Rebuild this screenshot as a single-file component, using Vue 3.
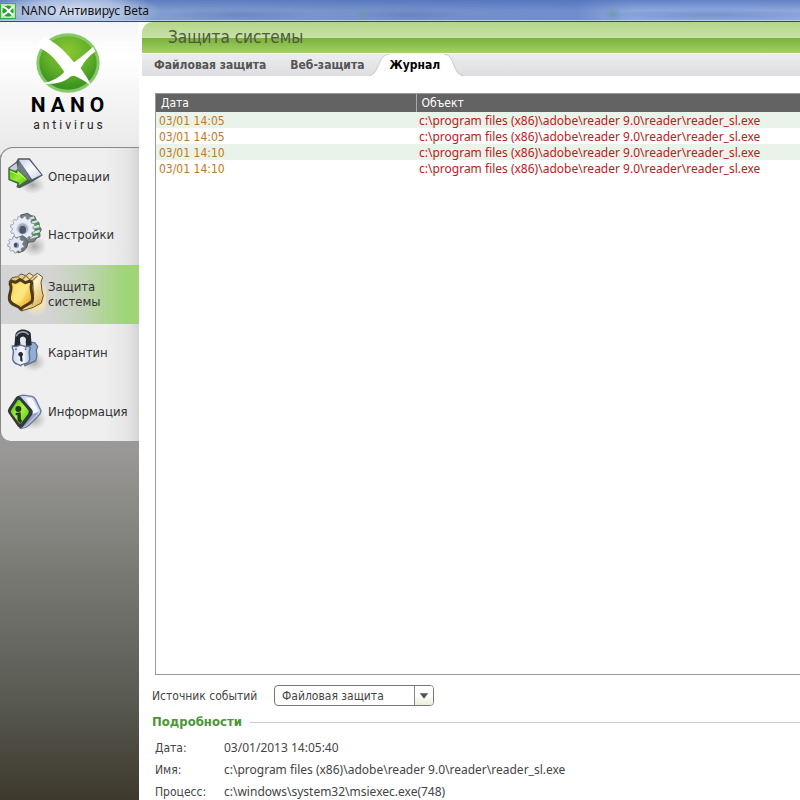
<script setup>
import { ref } from 'vue'

const tabs = ['Файловая защита', 'Веб-защита', 'Журнал']
const activeTab = ref('Журнал')

const menu = [
  { id: 'operations', label: 'Операции' },
  { id: 'settings', label: 'Настройки' },
  { id: 'protection', label: 'Защита системы' },
  { id: 'quarantine', label: 'Карантин' },
  { id: 'info', label: 'Информация' },
]
const activeItem = ref('protection')

const path = 'c:\\program files (x86)\\adobe\\reader 9.0\\reader\\reader_sl.exe'
const events = [
  { date: '03/01 14:05', object: path },
  { date: '03/01 14:05', object: path },
  { date: '03/01 14:10', object: path },
  { date: '03/01 14:10', object: path },
]
const source = ref('Файловая защита')
const details = [
  { name: 'Дата:', value: '03/01/2013 14:05:40' },
  { name: 'Имя:', value: path },
  { name: 'Процесс:', value: 'c:\\windows\\system32\\msiexec.exe(748)' },
]

// Gear outline: alternating tooth and root radii around a centre
function gear(cx, cy, outer, inner, teeth) {
  const points = []
  for (let i = 0; i < teeth; i++) {
    const a = (i / teeth) * Math.PI * 2
    const s = (Math.PI * 2) / teeth
    for (const [f, r] of [[0.05, inner], [0.2, outer], [0.55, outer], [0.7, inner]]) {
      points.push(`${(cx + r * Math.cos(a + s * f)).toFixed(1)},${(cy + r * Math.sin(a + s * f)).toFixed(1)}`)
    }
  }
  return points.join(' ')
}
</script>

<template>
  <div class="window">
    <header class="titlebar">
      <svg class="app-icon" viewBox="0 0 16 16" aria-hidden="true">
        <rect x="0.5" y="0.5" width="15" height="15" fill="#b4ecae" stroke="#3fae52" />
        <circle cx="8" cy="8" r="5.5" fill="#279b35" />
        <path d="M2 3.5 C5 4 8 7 9.5 9 L13 12 M13.5 3.5 C10 6 7 11 2.5 12" fill="none" stroke="#fff" stroke-width="2" />
      </svg>
      <span class="app-title">NANO Антивирус Beta</span>
    </header>

    <div class="body">
      <aside class="sidebar">
        <div class="brand">
          <svg class="logo" viewBox="105 39 198 180" aria-hidden="true">
            <defs>
              <radialGradient id="ball" cx="0.5" cy="0.3" r="0.65">
                <stop offset="0" stop-color="#8cc832" />
                <stop offset="0.6" stop-color="#62b028" />
                <stop offset="1" stop-color="#3c9420" />
              </radialGradient>
            </defs>
            <ellipse cx="204" cy="129" rx="95" ry="89" fill="#86c968" />
            <ellipse cx="204" cy="129" rx="86" ry="80" fill="url(#ball)" />
            <path d="M110 78 L134 92 C158 107 178 132 193 156 C172 177 150 188 112 191 L126 191 C156 194 187 192 213 169 L223 167 C239 174 257 184 274 198 C268 183 255 164 242 145 C252 125 267 109 286 94 L279 81 C259 98 240 115 222 127 C204 104 183 81 157 65 L134 48 Z" fill="#fff" />
          </svg>
          <strong class="brand-name">NANO</strong>
          <span class="brand-sub">antivirus</span>
        </div>

        <nav class="menu">
          <button
            v-for="item in menu"
            :key="item.id"
            type="button"
            class="menu-item"
            :class="{ active: item.id === activeItem }"
            @click="activeItem = item.id"
          >
            <svg v-if="item.id === 'operations'" class="menu-icon" viewBox="12 33 126 150" aria-hidden="true">
              <defs>
                <radialGradient id="shade"><stop offset="0" stop-color="#777" stop-opacity="0.6" /><stop offset="1" stop-color="#999" stop-opacity="0" /></radialGradient>
                <linearGradient id="panel" x1="0" y1="0" x2="1" y2="1"><stop offset="0" stop-color="#c6d0e6" /><stop offset="0.5" stop-color="#fbfcff" /><stop offset="1" stop-color="#c5cce8" /></linearGradient>
                <linearGradient id="arrow" x1="0" y1="0" x2="1" y2="1"><stop offset="0" stop-color="#4fbf0c" /><stop offset="0.5" stop-color="#98ee36" /><stop offset="1" stop-color="#42b808" /></linearGradient>
              </defs>
              <ellipse cx="98" cy="135" rx="38" ry="27" fill="url(#shade)" />
              <path d="M25 83 L48 66 L54 55 L89 55 L129 106 L96 126 L59 145 L49 142 L52 131 L25 120 Z" fill="#525a60" />
              <path d="M29 84 L50 69 L53 89 L45 92 L30 88 Z" fill="#c5cddb" />
              <path d="M57 62 L76 90 L94 123 L80 115 L53 87 Z" fill="#727d88" />
              <path d="M56 59 L87 59 L124 104 L96 118 Z" fill="url(#panel)" />
              <path d="M27 87 L50 98 L52 88 L84 119 L56 138 L56 128 L28 118 Z" fill="url(#arrow)" stroke="#286d0d" stroke-width="2" />
              <path d="M31 94 L55 104 L56 97 L76 117" fill="none" stroke="#caff7b" stroke-width="3" />
            </svg>
            <svg v-else-if="item.id === 'settings'" class="menu-icon" viewBox="12 211 126 150" aria-hidden="true">
              <ellipse cx="103" cy="320" rx="38" ry="32" fill="url(#shade)" />
              <path d="M62 226 L83 221 L93 228 L104 230 L109 242 L117 249 L118 260 L124 269 L119 279 L120 291 L110 295 L102 306 L90 307 L78 313 Z" fill="#788087" stroke="#525b62" stroke-width="3" />
              <path d="M87 238 L103 233 M96 249 L113 244 M99 263 L118 259 M98 279 L119 274 M91 294 L113 288" stroke="#d9e2e5" stroke-width="7" />
              <path d="M91 244 L107 239 M98 257 L116 252 M99 272 L121 267 M95 288 L117 282" stroke="#3f9540" stroke-width="5" />
              <polygon :points="gear(68, 266, 37, 31, 12)" fill="#e9edf7" stroke="#7b8390" stroke-width="2" />
              <circle cx="68" cy="267" r="18" fill="#a6afc1" stroke="#d7deed" stroke-width="4" />
              <ellipse cx="68" cy="270" rx="10" ry="12" fill="#4c5768" />
              <path d="M48 297 L68 288 L79 296 L83 308 L81 322 L72 333 L54 340 Z" fill="#72777d" stroke="#555e65" stroke-width="3" />
              <polygon :points="gear(48, 315, 25, 20, 9)" fill="#e4eaf5" stroke="#737c88" stroke-width="2" />
              <ellipse cx="49" cy="317" rx="8" ry="9" fill="#929db1" />
              <ellipse cx="47" cy="316" rx="5" ry="6" fill="#3f4956" />
            </svg>
            <svg v-else-if="item.id === 'protection'" class="menu-icon" viewBox="12 43 126 150" aria-hidden="true">
              <defs>
                <radialGradient id="glow"><stop offset="0" stop-color="#ffd34d" /><stop offset="0.5" stop-color="#ffe6a0" stop-opacity="0.8" /><stop offset="1" stop-color="#fff0c0" stop-opacity="0" /></radialGradient>
                <linearGradient id="gold" x1="0" y1="0" x2="1" y2="1"><stop offset="0" stop-color="#ffcf38" /><stop offset="0.5" stop-color="#ffe475" /><stop offset="1" stop-color="#e59410" /></linearGradient>
                <linearGradient id="edge" x1="0" y1="0" x2="1" y2="1"><stop offset="0" stop-color="#d6ae48" /><stop offset="0.5" stop-color="#fff7d1" /><stop offset="1" stop-color="#d79c31" /></linearGradient>
              </defs>
              <ellipse cx="109" cy="130" rx="42" ry="57" fill="url(#glow)" />
              <path d="M27 81 L36 69 L53 66 L63 58 L78 63 L88 55 L101 64 L112 56 L128 67 L123 82 L126 109 L130 123 L124 145 L100 158 L64 169 Z" fill="url(#edge)" stroke="#665536" stroke-width="3" />
              <path d="M53 67 L65 76 L78 63 L89 75 L101 65 M91 84 L112 63 M97 150 L101 118 L99 89" fill="none" stroke="#9a7e45" stroke-width="4" />
              <path d="M34 79 L46 83 L61 75 L76 84 L91 79 L96 85 C86 104 104 122 96 139 C89 152 72 149 63 164 C52 149 36 155 29 137 C23 120 41 102 30 88 Z" fill="url(#gold)" stroke="#4e3b1d" stroke-width="9" stroke-linejoin="round" />
              <path d="M40 90 L53 91 L62 84 L77 91 L86 89 L66 143 L38 134 L44 112 Z" fill="#fff0a1" opacity="0.35" />
            </svg>
            <svg v-else-if="item.id === 'quarantine'" class="menu-icon" viewBox="12 219 126 150" aria-hidden="true">
              <defs>
                <linearGradient id="lock" x1="0" y1="0" x2="1" y2="0"><stop offset="0" stop-color="#c9d9ef" /><stop offset="0.6" stop-color="#f7faff" /><stop offset="1" stop-color="#a1badb" /></linearGradient>
              </defs>
              <ellipse cx="101" cy="321" rx="37" ry="30" fill="url(#shade)" />
              <path d="M42 272 L70 260 L104 263 L113 274 L109 286 L111 302 L107 317 L75 332 Z" fill="#8faed1" stroke="#65728d" stroke-width="4" />
              <path d="M43 277 L46 239 C52 219 82 220 92 234 L95 270 L79 278 L77 250 C70 242 62 245 60 252 L61 279 Z" fill="#252a32" />
              <path d="M49 244 C54 229 75 226 86 239" fill="none" stroke="#9ba4b2" stroke-width="5" />
              <path d="M62 249 C65 244 73 244 76 251 L77 271 L62 273 Z" fill="#e5e7ea" />
              <path d="M37 273 L48 275 L62 270 L78 276 L87 273 L91 280 C81 295 95 306 87 320 C79 331 67 323 62 332 C52 325 42 329 39 315 C34 301 47 292 37 280 Z" fill="url(#lock)" stroke="#5e6e8a" stroke-width="4" />
              <circle cx="48" cy="283" r="3" fill="#66758d" /><circle cx="77" cy="283" r="3" fill="#66758d" />
              <circle cx="62" cy="298" r="7" fill="#242b35" /><path d="M60 300 h6 l2 20 -7 -2 Z" fill="#242b35" />
            </svg>
            <svg v-else class="menu-icon" viewBox="12 50 126 150" aria-hidden="true">
              <defs>
                <linearGradient id="lime" x1="0" y1="0" x2="1" y2="1"><stop offset="0" stop-color="#4fb914" /><stop offset="0.5" stop-color="#a2f63d" /><stop offset="1" stop-color="#55c80c" /></linearGradient>
              </defs>
              <ellipse cx="101" cy="151" rx="39" ry="31" fill="url(#shade)" />
              <path d="M55 82 Q60 77 75 78 L96 81 Q103 83 107 91 L123 124 Q124 131 115 139 L85 169 Q75 178 61 177 Z" fill="#c8d5ef" stroke="#6e7a94" stroke-width="4" />
              <path d="M76 84 L96 87 L116 125 L100 134 Z" fill="#f3f6ff" />
              <path d="M98 133 L117 129 L78 169 L66 172 Z" fill="#97a6c8" />
              <path d="M48 84 Q55 76 63 84 L97 122 Q101 129 96 137 L69 172 Q61 180 53 171 L26 132 Q21 125 26 117 Z" fill="#343a3a" />
              <path d="M53 93 Q57 89 61 94 L85 123 Q88 128 84 134 L64 161 Q60 165 55 159 L34 131 Q31 127 34 122 Z" fill="url(#lime)" />
              <circle cx="55" cy="119" r="9" fill="#253919" />
              <path d="M47 131 L62 129 L63 151 L67 154 L61 162 L53 154 L52 137 L47 138 Z" fill="#253919" />
            </svg>
            <span>{{ item.label }}</span>
          </button>
        </nav>
      </aside>

      <main class="content">
        <h1 class="page-title">Защита системы</h1>
        <div class="tabs" role="tablist">
          <button
            v-for="tab in tabs"
            :key="tab"
            type="button"
            role="tab"
            class="tab"
            :class="{ current: tab === activeTab }"
            :aria-selected="tab === activeTab"
            @click="activeTab = tab"
          >
            <svg v-if="tab === activeTab" class="tab-edge" viewBox="0 0 20 22" aria-hidden="true">
              <path d="M0 22 C11 20 8 1 20 0 V22 Z" fill="#fff" />
              <path d="M0 22 C11 20 8 1 20 0" fill="none" stroke="#c9c9cc" />
            </svg>
            <span class="tab-label">{{ tab }}</span>
            <svg v-if="tab === activeTab" class="tab-edge tab-edge-end" viewBox="0 0 24 22" aria-hidden="true">
              <path d="M0 0 H4 C16 1 11 20 24 22 H0 Z" fill="#fff" />
              <path d="M4 0 C16 1 11 20 24 22" fill="none" stroke="#c9c9cc" />
            </svg>
          </button>
        </div>

        <section class="log">
          <table class="events">
            <thead>
              <tr><th class="date-col">Дата</th><th>Объект</th></tr>
            </thead>
            <tbody>
              <tr v-for="(event, i) in events" :key="i">
                <td class="date">{{ event.date }}</td>
                <td class="object">{{ event.object }}</td>
              </tr>
            </tbody>
          </table>
        </section>

        <div class="source">
          <label for="source">Источник событий</label>
          <div class="select-box">
            <select id="source" v-model="source">
              <option>Файловая защита</option>
              <option>Веб-защита</option>
            </select>
            <svg class="select-arrow" viewBox="0 0 19 19" aria-hidden="true">
              <path d="M5 7 H14 L9.5 13 Z" fill="#555" />
            </svg>
          </div>
        </div>

        <h2 class="details-title">Подробности</h2>
        <dl class="details">
          <template v-for="row in details" :key="row.name">
            <dt>{{ row.name }}</dt>
            <dd>{{ row.value }}</dd>
          </template>
        </dl>
      </main>
    </div>
  </div>
</template>

<style>
body {
  margin: 0;
  background: #fff;
}
</style>

<style scoped>
.window {
  display: flex;
  flex-direction: column;
  height: 100vh;
  overflow: hidden;
  font-family: "DejaVu Sans Condensed", "Noto Sans", sans-serif;
  font-size: 12px;
  line-height: 16px;
  color: #444;
}
.window *,
.window *::before {
  box-sizing: border-box;
}
button,
select {
  margin: 0;
  border: 0;
  background: none;
  font: inherit;
  color: inherit;
}

.titlebar {
  display: flex;
  align-items: center;
  gap: 5px;
  height: 22px;
  border-bottom: 1px solid #34486c;
  box-shadow: inset 0 -1px #b9cbec;
  background:
    radial-gradient(ellipse 85px 22px at 75px 12px, #d5dff1 0, #b5c6e5cc 60%, #b5c6e500 100%),
    radial-gradient(ellipse 9px 8px at 362px 14px, #6a9c9c88, #6a9c9c00),
    radial-gradient(ellipse 9px 8px at 613px 14px, #629b9c99, #629b9c00),
    radial-gradient(ellipse 75px 6px at 240px 15px, #4d68a255, #4d68a200),
    radial-gradient(ellipse 55px 6px at 410px 15px, #4d68a255, #4d68a200),
    radial-gradient(ellipse 110px 6px at 710px 15px, #5d7bb477, #5d7bb400),
    linear-gradient(#4468b599, #7895cf00 50%),
    linear-gradient(90deg, #8ba4d2, #7792cb 45%, #708ccc 72%, #8ea8de 79%, #8ea7dc);
}
.app-icon {
  width: 16px;
  height: 16px;
}
.app-title {
  font-family: "Noto Sans", sans-serif;
  font-size: 12px;
  color: #111;
}

.body {
  display: flex;
  flex: 1;
  min-height: 0;
}
.sidebar {
  flex: none;
  width: 139px;
  background: linear-gradient(#aaa 0, #a6a6a5 40%, #999896 55%, #595a52 87%, #3e392d 100%);
}
.brand {
  display: flex;
  flex-direction: column;
  align-items: center;
  height: 133px;
  padding: 11px 4px 0 0;
  background: linear-gradient(#f5f5f7, #fff 25%, #e8e8e8);
}
.logo {
  width: 66px;
  height: 60px;
}
.brand-name {
  padding-left: 5px;
  font-family: Roboto, sans-serif;
  font-size: 21px;
  line-height: 25px;
  letter-spacing: 5px;
  color: #000;
}
.brand-sub {
  padding-left: 4px;
  font-family: Roboto, sans-serif;
  font-size: 12px;
  line-height: 14px;
  letter-spacing: 3px;
  color: #222;
}
.menu {
  display: flex;
  flex-direction: column;
  margin-top: -8px;
  border: solid #888;
  border-width: 1px 0 0 1px;
  border-radius: 13px 0 0 10px;
  overflow: hidden;
  background: linear-gradient(90deg, #efefef 75%, #e6e6e6 91%, #d4d4d4);
}
.menu-item {
  display: flex;
  align-items: center;
  gap: 2px;
  height: 59px;
  padding: 0 6px 2px 3px;
  text-align: left;
  font-size: 13px;
  line-height: 15px;
  color: #333;
}
.menu-item:first-child,
.menu-item:last-child {
  height: 58px;
}
.menu-item.active {
  background: linear-gradient(90deg, #d4d4d4 35%, #c2d3b7 60%, #a0d577 90%);
}
.menu-icon {
  flex: none;
  width: 42px;
  height: 50px;
}

.content {
  display: flex;
  flex: 1;
  flex-direction: column;
  min-width: 0;
  padding-left: 3px;
}
.page-title {
  margin: 0;
  height: 31px;
  padding-left: 26px;
  border-radius: 11px 0 0 0;
  background:
    linear-gradient(#b3d688, #c9e1a8) 0 0 / 100% 16px no-repeat,
    linear-gradient(#7ab238, #a3d06c) 0 16px / 100% 15px no-repeat;
  font-size: 17px;
  font-weight: 400;
  line-height: 31px;
  color: #4d5940;
}
.tabs {
  display: flex;
  height: 23px;
  border-top: 1px solid #fff;
  background: linear-gradient(#eeeef0, #dcdde0);
}
.tab {
  display: flex;
  padding: 0 12px;
  font-size: 12px;
  font-weight: 700;
  line-height: 22px;
  color: #555;
}
.tab.current {
  padding: 0;
  margin-left: -7px;
  color: #000;
}
.tab.current .tab-label {
  background: #fff;
}
.tab-edge {
  width: 20px;
  height: 22px;
}
.tab-edge-end {
  width: 24px;
}

.log {
  flex: 1;
  min-height: 0;
  margin: 17px 0 0 13px;
  border: solid #999;
  border-width: 1px 0 1px 1px;
}
.events {
  width: 100%;
  border-collapse: collapse;
  table-layout: fixed;
}
.events th {
  height: 18px;
  padding: 0 5px;
  background: #636363;
  font-weight: 400;
  text-align: left;
  color: #fff;
}
.events .date-col {
  width: 260px;
}
.events th + th {
  border-left: 1px solid #aaa;
}
.events td {
  height: 16px;
  padding: 2px 3px 0;
  line-height: 14px;
  white-space: nowrap;
}
.events tbody tr:nth-child(odd) {
  background: #eaf3ea;
}
.date {
  color: #c07820;
}
.object {
  color: #b81c20;
}
.object,
.details dd {
  font-family: "Noto Sans", sans-serif;
}

.source {
  display: flex;
  align-items: center;
  padding: 10px 0 8px 10px;
}
.source label {
  width: 122px;
}
.select-box {
  display: grid;
  grid-template-columns: 139px 19px;
  border: 1px solid #777;
  border-radius: 4px;
}
.select-box select {
  grid-area: 1 / 1 / 2 / 3;
  height: 19px;
  padding: 0 22px 0 7px;
  appearance: none;
}
.select-arrow {
  grid-area: 1 / 2;
  width: 19px;
  height: 19px;
  border-left: 1px solid #888;
  background: linear-gradient(#fff 45%, #e9eedc);
  border-radius: 0 3px 3px 0;
  pointer-events: none;
}

.details-title {
  display: flex;
  align-items: center;
  gap: 8px;
  margin: 0;
  padding-left: 10px;
  font-size: 13px;
  line-height: 16px;
  color: #4b9636;
}
.details-title::after {
  content: "";
  flex: 1;
  height: 1px;
  background: #ccc;
}
.details {
  display: grid;
  grid-template-columns: 69px 1fr;
  row-gap: 6px;
  margin: 10px 0 0;
  padding-left: 13px;
}
.details dd {
  margin: 0;
}
</style>
